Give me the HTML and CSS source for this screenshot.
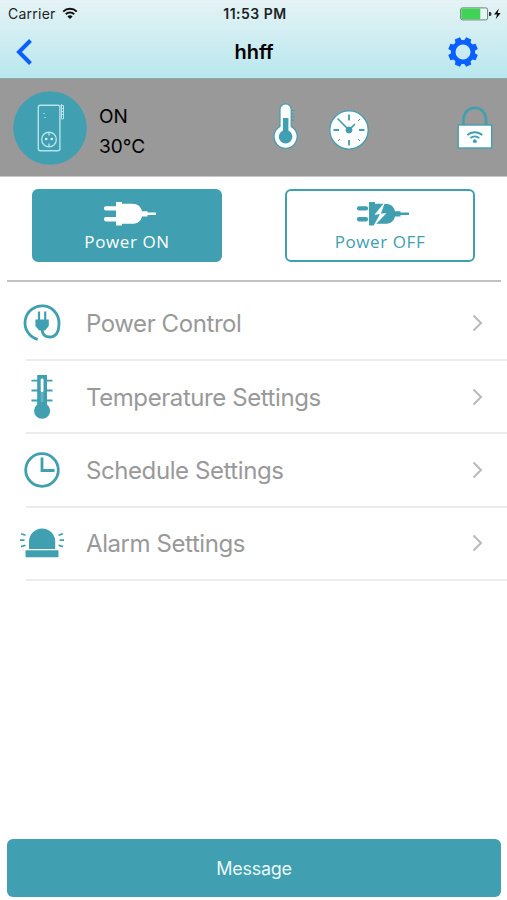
FILE: index.html
```
<!DOCTYPE html>
<html lang="en">
<head>
    <meta charset="UTF-8">
    <meta name="viewport" content="width=device-width, initial-scale=1.0">
    <title>hhff</title>
    <link rel="stylesheet" href="styles.css">
</head>
<body>
    <header>
        <div class="status-bar">
            <div class="carrier">
                <span class="carrier-name">Carrier</span>
                <svg width="16" height="13" viewBox="0 0 16 13" fill="none" stroke="#111" stroke-width="2">
                    <path d="M1.2 4.6a9.8 9.8 0 0 1 13.6 0M3.8 7.3a6 6 0 0 1 8.4 0"/>
                    <path d="M8 12 5.4 9.4a3.8 3.8 0 0 1 5.2 0z" fill="#111" stroke="none"/>
                </svg>
            </div>
            <span class="time">11:53 PM</span>
            <svg class="battery" width="42" height="14" viewBox="0 0 42 14">
                <rect x=".6" y=".9" width="27" height="12" rx="1.8" fill="#e6f6f5" stroke="#6f7f7d"/>
                <rect x="1.3" y="1.6" width="19" height="10.6" rx=".8" fill="#3fd455"/>
                <path d="M29 5h1a1.5 2 0 0 1 0 4h-1z" fill="#333"/>
                <path d="M38.8 1.5 34 7.4h3l-1.3 4.8 5-6.2h-3z" fill="#111"/>
            </svg>
        </div>
        <nav>
            <svg width="17" height="26" viewBox="0 0 17 26" fill="none" stroke="#0a60ff" stroke-width="4">
                <path d="M15.5 1.5 4 13l11.5 11.5"/>
            </svg>
            <h1>hhff</h1>
            <svg width="30" height="30" viewBox="-15 -15 30 30">
                <circle r="9.8" fill="none" stroke="#0a60ff" stroke-width="4.6"/>
                <g fill="#0a60ff">
                    <path id="tooth" d="M-3.5-10.5-2.8-14.8h5.6l.7 4.3z" transform="rotate(22.5)"/>
                    <use href="#tooth" transform="rotate(45)"/>
                    <use href="#tooth" transform="rotate(90)"/>
                    <use href="#tooth" transform="rotate(135)"/>
                    <use href="#tooth" transform="rotate(180)"/>
                    <use href="#tooth" transform="rotate(225)"/>
                    <use href="#tooth" transform="rotate(270)"/>
                    <use href="#tooth" transform="rotate(315)"/>
                </g>
            </svg>
        </nav>
    </header>

    <section class="device">
        <svg width="74" height="74" viewBox="0 0 74 74" fill="none" stroke="#b5e3ea">
            <circle cx="37" cy="37" r="36.8" fill="#409fb0" stroke="none"/>
            <rect x="25.3" y="14.3" width="21.6" height="45.4" rx="2" stroke-width="1.4"/>
            <path d="M47.5 14.5h3v13.3h-3M48.5 13v14" stroke-width="1"/>
            <path d="M49.5 17v9" stroke-dasharray="1 2"/>
            <path d="M30 22.5h2M31 26.5h2" stroke-width="1.2" opacity=".7"/>
            <circle cx="36" cy="48.5" r="7.3" stroke-width="1.4"/>
            <path d="M36 41.5v3M36 52.5v3" stroke-width="1.4"/>
            <circle cx="33.2" cy="48" r="1.3" fill="#d8f2f5" stroke="none"/>
            <circle cx="38.8" cy="48" r="1.3" fill="#d8f2f5" stroke="none"/>
        </svg>
        <div class="device-state">
            <span>ON</span>
            <span>30°C</span>
        </div>
        <svg class="icon-temp" width="28" height="46" viewBox="0 0 28 46">
            <path d="M7 23.5V6.5a5.6 5.6 0 0 1 11.2 0v17a11.6 11.6 0 1 1-11.2 0z" fill="#fff" stroke="#409fb0" stroke-width="1.2"/>
            <circle cx="12.6" cy="33.8" r="6.8" fill="#409fb0"/>
            <path d="M10 15h5.4v14H10z" fill="#409fb0"/>
            <path d="M18.5 7.5h3.3M18.5 10.8h2.4M18.5 14h3.3M18.5 17.4h2.4" stroke="#409fb0" stroke-width="1.2"/>
        </svg>
        <svg class="icon-clock" width="40" height="40" viewBox="-20 -20 40 40" stroke="#409fb0">
            <circle r="19.2" fill="#fff" stroke-width="1.3"/>
            <path d="M0-15.5v6M0 10v5.5M-15.5 0h5.5M10 0h5.5" stroke-width="1.8"/>
            <path d="M11-11l-2 2M-11 11l2-2M11 11l-2-2" stroke-width="1"/>
            <path d="M-11.5-11.5 0 0 6-6" fill="none" stroke-width="1.6"/>
            <circle r="3" fill="#409fb0"/>
        </svg>
        <svg class="icon-lock" width="36" height="44" viewBox="0 0 36 44" fill="none" stroke="#409fb0">
            <path d="M6.500 20v-6.500a11 11.500 0 0 1 22.500 0V20" stroke-width="2.600"/>
            <rect x="1.200" y="19" width="33.400" height="23" fill="#fff" stroke-width="1.400"/>
            <path d="M10.300 29.200a11 11 0 0 1 15 0M13.300 32.200a6.800 6.800 0 0 1 9 0" stroke-width="1.800"/>
            <circle cx="17.800" cy="35.200" r="1.900" fill="#409fb0" stroke="none"/>
        </svg>
    </section>

    <section class="power">
        <button class="power-btn on">
            <svg width="52" height="24" viewBox="0 0 52 24" fill="currentColor">
                <rect x="0" y="4.2" width="14" height="4.4" rx="1.8"/>
                <rect x="0" y="15" width="14" height="4.4" rx="1.8"/>
                <path d="M12 0h6v1.8h10c6 0 9 3 10 7.4h5.5v1.2H52V13h-8.5v1.4H38c-1 4.4-4 7.4-10 7.4H18v1.6h-6z"/>
            </svg>
            <span>Power ON</span>
        </button>
        <button class="power-btn off">
            <svg width="52" height="24" viewBox="0 0 52 24" fill="currentColor">
                <rect x="0" y="4.2" width="11" height="4.4" rx="1.8"/>
                <rect x="0" y="15" width="11" height="4.4" rx="1.8"/>
                <path d="M12 0h6v1.8h10c6 0 9 3 10 7.4h5.5v1.2H52V13h-8.5v1.4H38c-1 4.4-4 7.4-10 7.4H18v1.6h-6z"/>
                <path d="M27.500.8 18 12.500l5.500-.8L16.800 24l12-12.500-5.400.6z" fill="#fff" stroke="#fff" stroke-width=".6"/>
            </svg>
            <span>Power OFF</span>
        </button>
    </section>

    <ul class="menu">
        <li>
            <svg class="menu-icon" width="46" height="46" viewBox="-23 -23 46 46" fill="none" stroke="#409fb0" stroke-width="2.8">
                <path d="M-4.3 16.3A17 17 0 1 1 17 0C17 9 13.500 14 7.500 14 2.500 14 .2 11 0 6"/>
                <path d="M-3-11.500V-3M3.200-11.500V-3" stroke-width="2.200"/>
                <path d="M-6.600-3.500H6.800V3L3 7.500H-2.800L-6.600 3z" fill="#409fb0" stroke="none"/>
            </svg>
            <span class="label">Power Control</span>
            <svg class="arrow" width="11" height="18" viewBox="0 0 11 18"><path d="M1.5 1.5 9 9l-7.5 7.5"/></svg>
        </li>
        <li>
            <svg class="menu-icon" width="46" height="46" viewBox="-23 -23 46 46">
                <path d="M-4.800-22H5V7.500A8 8 0 1 1-4.800 7.500z" fill="#409fb0"/>
                <path d="M-10.500-16.300H-4M4-16.300h6.500M-10.500-6.500H-4M4-6.500h6.500M-10.500 3.500H-4M4 3.500h6.500" stroke="#409fb0" stroke-width="1.800"/>
                <rect x="-1.300" y="-18.500" width="2.800" height="13.500" rx="1.200" fill="#fff"/>
                <rect x="-1.300" y="-5" width="2.800" height="10" fill="#67b4c1"/>
            </svg>
            <span class="label">Temperature Settings</span>
            <svg class="arrow" width="11" height="18" viewBox="0 0 11 18"><path d="M1.5 1.5 9 9l-7.5 7.5"/></svg>
        </li>
        <li>
            <svg class="menu-icon" width="46" height="46" viewBox="-23 -23 46 46" fill="none" stroke="#409fb0" stroke-width="2.8">
                <circle r="16.3"/>
                <path d="M0-12.500V.5H12.500"/>
            </svg>
            <span class="label">Schedule Settings</span>
            <svg class="arrow" width="11" height="18" viewBox="0 0 11 18"><path d="M1.5 1.5 9 9l-7.5 7.5"/></svg>
        </li>
        <li>
            <svg class="menu-icon" width="46" height="46" viewBox="-23 -23 46 46" fill="#409fb0">
                <path d="M-13 6V-1.500a13.100 13 0 0 1 26.200 0V6z"/>
                <rect x="-16.500" y="7.300" width="33" height="7" rx=".8"/>
                <path d="M-21-9.300l4.500 1.600M-22-2.800h4.500M-21 3.600l4.500-1.400M21-9.300l-4.500 1.600M22-2.800h-4.500M21 3.600l-4.500-1.400" stroke="#409fb0" stroke-width="1.700"/>
            </svg>
            <span class="label">Alarm Settings</span>
            <svg class="arrow" width="11" height="18" viewBox="0 0 11 18"><path d="M1.5 1.5 9 9l-7.5 7.5"/></svg>
        </li>
    </ul>

    <footer>
        <button class="message-btn">Message</button>
    </footer>
</body>
</html>
```

FILE: styles.css
```
* {
    box-sizing: border-box;
}

body {
    font-family: Inter, "Liberation Sans", sans-serif;
    background-color: #fff;
    margin: 0;
    height: 900px;
    display: flex;
    flex-direction: column;
}

svg {
    display: block;
    flex: none;
}

header {
    height: 79px;
    background: linear-gradient(#e5f3f5, #b8e7ee);
    border-bottom: 1px solid #8fa9ac;
}

.status-bar {
    display: grid;
    grid-template-columns: 1fr auto 1fr;
    align-items: center;
    height: 27px;
    padding: 0 5px 0 8px;
    color: #1c2425;
    font-size: 14px;
}

.carrier {
    display: flex;
    align-items: center;
    gap: 6px;
}

.carrier-name {
    letter-spacing: 0.25px;
}

.time {
    font-weight: 600;
    letter-spacing: 0.5px;
}

.battery {
    justify-self: end;
}

nav {
    display: flex;
    align-items: center;
    justify-content: space-between;
    height: 50px;
    padding: 0 29px 0 15px;
}

nav h1 {
    margin: 0 0 0 28px;
    font-size: 20px;
    font-weight: 600;
}

/* device info */
.device {
    display: flex;
    align-items: center;
    height: 98px;
    padding: 0 14px 0 13px;
    background-color: #999;
    border-bottom: 1px solid #c8c8c8;
}

.device-state {
    display: flex;
    flex-direction: column;
    width: 186px;
    padding: 8px 0 0 12px;
    font-size: 19px;
    line-height: 30px;
}

.icon-temp {
    margin-bottom: 3px;
}

.icon-clock {
    margin: 4px 0 0 28px;
}

.icon-lock {
    margin-left: auto;
}

/* power buttons */
.power {
    display: flex;
    justify-content: space-between;
    height: 105px;
    margin: 0 6px 0 7px;
    padding: 12px 26px 0 25px;
    border-bottom: 2px solid #c2c2c2;
}

.power-btn {
    display: flex;
    flex-direction: column;
    align-items: center;
    width: 190px;
    height: 73px;
    padding: 11px 0 0;
    border: 2px solid #409fb0;
    border-radius: 6px;
    font-family: "Open Sans", "Noto Sans", sans-serif;
    font-size: 17px;
    letter-spacing: 0.6px;
    line-height: 24px;
}

.power-btn svg {
    margin: 0 0 4px 5px;
}

.power-btn.on {
    background-color: #409fb0;
    color: #fff;
}

.power-btn.off {
    background-color: #fff;
    color: #409fb0;
}

/* settings list */
.menu {
    list-style: none;
    margin: 5.5px 0 0;
    padding: 0 0 0 26px;
}

.menu li {
    display: flex;
    align-items: center;
    height: 73.4px;
    padding-right: 24px;
    border-bottom: 2px solid #ececec;
}

.menu-icon {
    margin-left: -7px;
}

.label {
    flex: 1;
    padding: 1px 0 0 21px;
    color: #999;
    font-size: 24px;
    letter-spacing: -0.42px;
}

.arrow {
    fill: none;
    stroke: #b9b9b9;
    stroke-width: 2;
}

footer {
    margin-top: auto;
    padding: 0 6px 3px 7px;
}

.message-btn {
    display: block;
    width: 100%;
    height: 58px;
    border: none;
    border-radius: 6px;
    background-color: #409fb0;
    color: #e9f9fb;
    font-family: inherit;
    font-size: 18px;
    letter-spacing: -0.3px;
}
```
